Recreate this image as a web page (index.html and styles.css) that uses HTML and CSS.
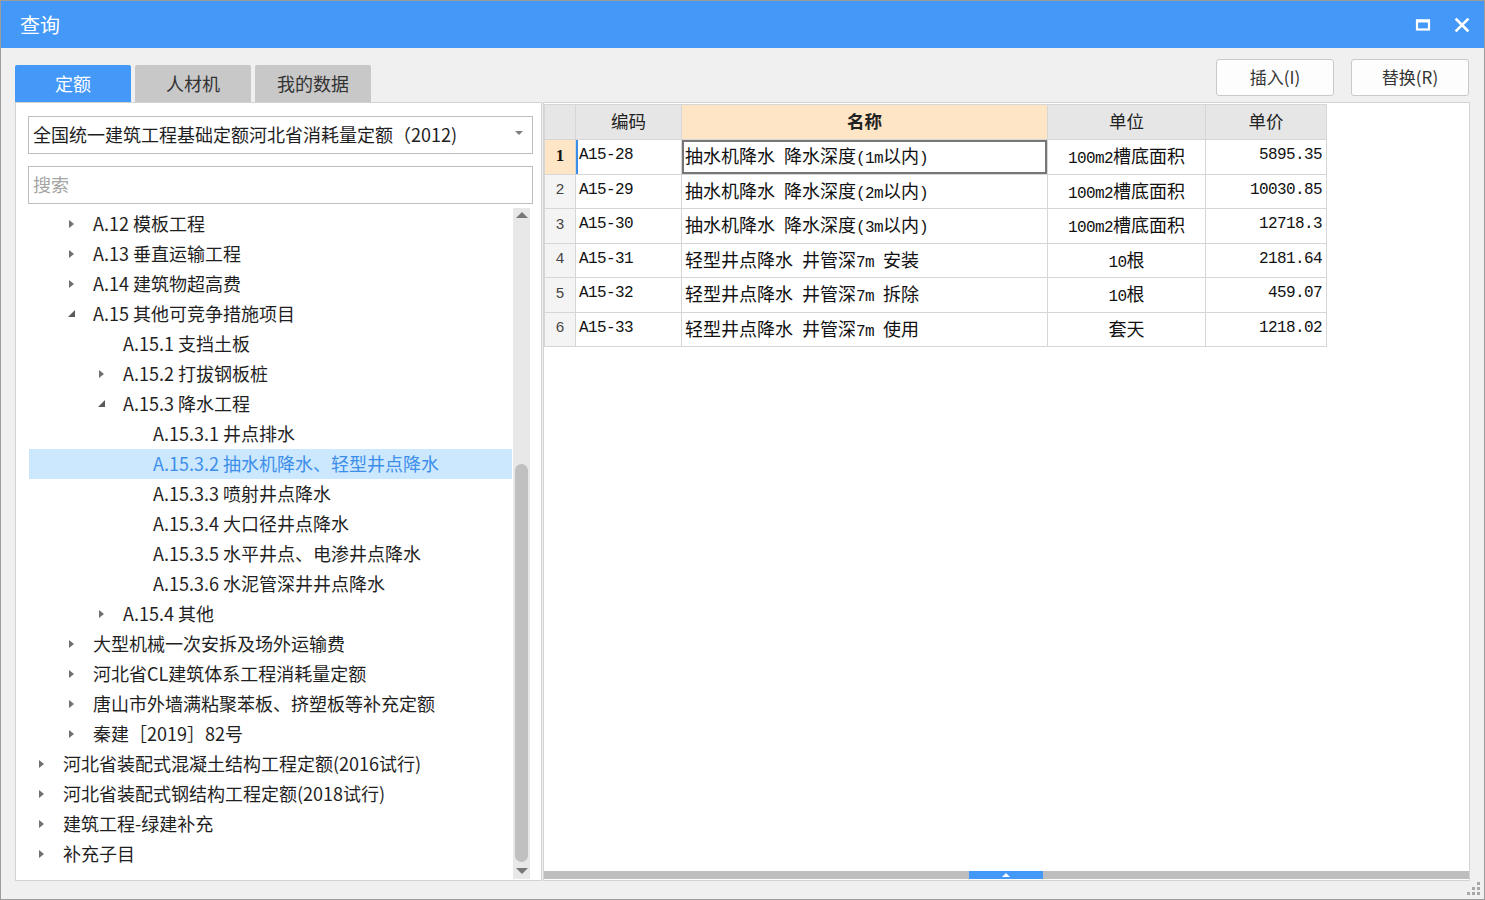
FILE: index.html
```html
<!DOCTYPE html>
<html lang="zh-CN">
<head>
<meta charset="utf-8">
<title>查询</title>
<link rel="stylesheet" href="styles.css">
</head>
<body>
<div class="window">
  <div class="titlebar">
    <span class="title">查询</span>
    <div class="winbtns">
      <svg class="wb" width="16" height="16" viewBox="0 0 16 16"><rect x="2" y="3.5" width="12" height="9" fill="none" stroke="#fff" stroke-width="2.2"/><rect x="1" y="2.5" width="14" height="3" fill="#fff"/></svg>
      <svg class="wb" width="16" height="16" viewBox="0 0 16 16"><path d="M2.5 2.5 L13.5 13.5 M13.5 2.5 L2.5 13.5" stroke="#fff" stroke-width="2.6" stroke-linecap="square"/></svg>
    </div>
  </div>
  <div class="toolbar">
    <div class="tabs">
      <div class="tab active">定额</div>
      <div class="tab">人材机</div>
      <div class="tab">我的数据</div>
    </div>
    <div class="actions">
      <div class="btn">插入(I)</div>
      <div class="btn">替换(R)</div>
    </div>
  </div>
  <div class="panels">
    <div class="left">
      <div class="select"><span>全国统一建筑工程基础定额河北省消耗量定额（2012)</span><i class="caret"></i></div>
      <div class="search">搜索</div>
      <div class="treewrap">
        <div class="tree">
          <div class="row l1"><i class="tw c"></i><span>A.12 模板工程</span></div>
          <div class="row l1"><i class="tw c"></i><span>A.13 垂直运输工程</span></div>
          <div class="row l1"><i class="tw c"></i><span>A.14 建筑物超高费</span></div>
          <div class="row l1"><i class="tw e"></i><span>A.15 其他可竞争措施项目</span></div>
          <div class="row l2"><i class="tw"></i><span>A.15.1 支挡土板</span></div>
          <div class="row l2"><i class="tw c"></i><span>A.15.2 打拔钢板桩</span></div>
          <div class="row l2"><i class="tw e"></i><span>A.15.3 降水工程</span></div>
          <div class="row l3"><i class="tw"></i><span>A.15.3.1 井点排水</span></div>
          <div class="row l3 sel"><i class="tw"></i><span>A.15.3.2 抽水机降水、轻型井点降水</span></div>
          <div class="row l3"><i class="tw"></i><span>A.15.3.3 喷射井点降水</span></div>
          <div class="row l3"><i class="tw"></i><span>A.15.3.4 大口径井点降水</span></div>
          <div class="row l3"><i class="tw"></i><span>A.15.3.5 水平井点、电渗井点降水</span></div>
          <div class="row l3"><i class="tw"></i><span>A.15.3.6 水泥管深井井点降水</span></div>
          <div class="row l2"><i class="tw c"></i><span>A.15.4 其他</span></div>
          <div class="row l1"><i class="tw c"></i><span>大型机械一次安拆及场外运输费</span></div>
          <div class="row l1"><i class="tw c"></i><span>河北省CL建筑体系工程消耗量定额</span></div>
          <div class="row l1"><i class="tw c"></i><span>唐山市外墙满粘聚苯板、挤塑板等补充定额</span></div>
          <div class="row l1"><i class="tw c"></i><span>秦建［2019］82号</span></div>
          <div class="row l0"><i class="tw c"></i><span>河北省装配式混凝土结构工程定额(2016试行)</span></div>
          <div class="row l0"><i class="tw c"></i><span>河北省装配式钢结构工程定额(2018试行)</span></div>
          <div class="row l0"><i class="tw c"></i><span>建筑工程-绿建补充</span></div>
          <div class="row l0"><i class="tw c"></i><span>补充子目</span></div>
        </div>
        <div class="vscroll">
          <i class="arr up"></i>
          <div class="vtrack"><div class="vthumb"></div></div>
          <i class="arr down"></i>
        </div>
      </div>
    </div>
    <div class="right">
      <div class="grid">
        <table>
          <colgroup><col class="c0"><col class="c1"><col class="c2"><col class="c3"><col class="c4"></colgroup>
          <thead>
            <tr><th></th><th>编码</th><th class="hl">名称</th><th>单位</th><th>单价</th></tr>
          </thead>
          <tbody>
            <tr class="cur"><td class="n">1</td><td class="code">A15-28</td><td class="name focus">抽水机降水<span class="m"> </span>降水深度<span class="m">(1m</span>以内<span class="m">)</span></td><td class="unit"><span class="m">100m2</span>槽底面积</td><td class="price">5895.35</td></tr>
            <tr><td class="n">2</td><td class="code">A15-29</td><td class="name">抽水机降水<span class="m"> </span>降水深度<span class="m">(2m</span>以内<span class="m">)</span></td><td class="unit"><span class="m">100m2</span>槽底面积</td><td class="price">10030.85</td></tr>
            <tr><td class="n">3</td><td class="code">A15-30</td><td class="name">抽水机降水<span class="m"> </span>降水深度<span class="m">(3m</span>以内<span class="m">)</span></td><td class="unit"><span class="m">100m2</span>槽底面积</td><td class="price">12718.3</td></tr>
            <tr><td class="n">4</td><td class="code">A15-31</td><td class="name">轻型井点降水<span class="m"> </span>井管深<span class="m">7m </span>安装</td><td class="unit"><span class="m">10</span>根</td><td class="price">2181.64</td></tr>
            <tr><td class="n">5</td><td class="code">A15-32</td><td class="name">轻型井点降水<span class="m"> </span>井管深<span class="m">7m </span>拆除</td><td class="unit"><span class="m">10</span>根</td><td class="price">459.07</td></tr>
            <tr><td class="n">6</td><td class="code">A15-33</td><td class="name">轻型井点降水<span class="m"> </span>井管深<span class="m">7m </span>使用</td><td class="unit">套天</td><td class="price">1218.02</td></tr>
          </tbody>
        </table>
      </div>
      <div class="hscroll"><div class="hthumb"><i class="hup"></i></div></div>
    </div>
  </div>
  <div class="statusbar">
    <svg class="grip" width="14" height="14" viewBox="0 0 14 14" fill="#a8a8a8">
      <rect x="10" y="0" width="3" height="3"/>
      <rect x="5" y="5" width="3" height="3"/><rect x="10" y="5" width="3" height="3"/>
      <rect x="0" y="10" width="3" height="3"/><rect x="5" y="10" width="3" height="3"/><rect x="10" y="10" width="3" height="3"/>
    </svg>
  </div>
</div>
</body>
</html>
```
FILE: styles.css
```css
* { box-sizing: border-box; }
html, body { margin: 0; padding: 0; }
body {
  width: 1485px;
  height: 900px;
  overflow: hidden;
  font-family: "Noto Sans CJK SC", "Noto Sans", sans-serif;
  color: #222;
  background: #f0f0f0;
}
.window {
  width: 1485px;
  height: 900px;
  border: 1px solid #9c9c9c;
  background: #f0f0f0;
  display: flex;
  flex-direction: column;
}
.titlebar {
  height: 47px;
  flex: none;
  background: #4498f8;
  display: flex;
  align-items: center;
  justify-content: space-between;
  padding: 0 14px 0 19px;
}
.title {
  color: #fff;
  font-size: 20px;
  line-height: 1;
  margin-top: 1px;
}
.winbtns {
  display: flex;
  gap: 23px;
  align-items: center;
}
.wb { display: block; }

.toolbar {
  height: 54px;
  flex: none;
  display: flex;
  justify-content: space-between;
  padding: 0 15px 0 14px;
}
.tabs {
  display: flex;
  gap: 4px;
  align-self: flex-end;
}
.tab {
  width: 116px;
  height: 37px;
  background: #c8c8c8;
  color: #333;
  font-size: 18px;
  display: flex;
  align-items: center;
  justify-content: center;
  padding-bottom: 2px;
  border-radius: 2px 2px 0 0;
}
.tab.active {
  background: #4498f8;
  color: #fff;
}
.actions {
  display: flex;
  gap: 17px;
  margin-top: 11px;
  align-self: flex-start;
}
.btn {
  width: 118px;
  height: 37px;
  border: 1px solid #c9c9c9;
  border-radius: 3px;
  background: #fdfdfd;
  color: #333;
  font-size: 17px;
  display: flex;
  align-items: center;
  justify-content: center;
  padding-bottom: 2px;
}

.panels {
  height: 779px;
  flex: none;
  display: flex;
  padding-left: 14px;
  gap: 1px;
}
.left {
  width: 527px;
  background: #fff;
  border: 1px solid #d3d3d3;
  display: flex;
  flex-direction: column;
  padding: 13px 8px 0 12px;
}
.select {
  height: 38px;
  border: 1px solid #bdbdbd;
  display: flex;
  align-items: center;
  justify-content: space-between;
  padding: 0 9px 2px 4px;
  font-size: 18px;
  color: #1e1e1e;
  flex: none;
}
.caret {
  width: 0; height: 0;
  border-left: 4px solid transparent;
  border-right: 4px solid transparent;
  border-top: 4px solid #808080;
  margin-bottom: 3px;
}
.search {
  margin-top: 12px;
  height: 38px;
  border: 1px solid #bdbdbd;
  display: flex;
  align-items: center;
  padding: 0 0 2px 4px;
  font-size: 18px;
  color: #a4a4a4;
  flex: none;
}
.treewrap {
  margin-top: 4px;
  flex: 1;
  display: flex;
  min-height: 0;
  padding-bottom: 1px;
}
.tree {
  width: 483px;
  margin-left: 1px;
  margin-right: 1px;
  padding-top: 1px;
  overflow: hidden;
}
.row {
  height: 30px;
  display: flex;
  align-items: center;
  font-size: 18px;
  color: #1f1f1f;
  white-space: nowrap;
}
.row span { margin-top: -3px; }
.row.l0 { padding-left: 0; }
.row.l1 { padding-left: 30px; }
.row.l2 { padding-left: 60px; }
.row.l3 { padding-left: 90px; }
.row.sel { background: #cce8ff; color: #3d8ee9; }
.tw {
  width: 34px;
  height: 30px;
  flex: none;
  position: relative;
}
.tw.c::before {
  content: "";
  position: absolute;
  left: 10px;
  top: 11px;
  border-left: 5px solid #707070;
  border-top: 4px solid transparent;
  border-bottom: 4px solid transparent;
}
.tw.e::before {
  content: "";
  position: absolute;
  left: 9px;
  top: 11px;
  border-bottom: 7px solid #5a5a5a;
  border-left: 7px solid transparent;
}
.vscroll {
  width: 17px;
  flex: none;
  background: #e8e8e8;
  display: flex;
  flex-direction: column;
  align-items: center;
}
.arr {
  display: block;
  width: 0; height: 0;
  flex: none;
  border-left: 6px solid transparent;
  border-right: 6px solid transparent;
}
.arr.up { border-bottom: 6px solid #777; margin: 4px 0 6px; }
.arr.down { border-top: 6px solid #777; margin: 6px 0 5px; }
.vtrack {
  flex: 1;
  width: 100%;
  display: flex;
  flex-direction: column;
  justify-content: flex-end;
  padding: 0 2px;
}
.vthumb {
  height: 398px;
  background: #c0c0c0;
  border-radius: 7px;
}

.right {
  width: 927px;
  background: #fff;
  border: 1px solid #d3d3d3;
  display: flex;
  flex-direction: column;
}
.grid {
  flex: 1;
}
table {
  border-collapse: collapse;
  table-layout: fixed;
  width: 782px;
  margin-top: 1px;
}
col.c0 { width: 31px; }
col.c1 { width: 106px; }
col.c2 { width: 366px; }
col.c3 { width: 158px; }
col.c4 { width: 121px; }
th, td {
  border: 1px solid #d6d6d6;
  padding: 0 0 3px 0;
  white-space: nowrap;
  overflow: hidden;
}
th {
  height: 35px;
  background: #e6e6e6;
  font-weight: normal;
  font-size: 17.5px;
  color: #222;
}
th.hl { background: #fde5c5; font-weight: bold; }
tbody tr { height: 34.5px; }
td {
  font-size: 18px;
  color: #111;
  font-family: "Noto Sans CJK SC", sans-serif;
}
.m { font-family: "Liberation Mono", monospace; font-size: 16px; letter-spacing: -0.6px; }
td.n {
  background: #f4f4f4;
  text-align: center;
  font-family: "Liberation Mono", monospace;
  font-size: 15px;
  color: #444;
  padding-bottom: 1px;
}
tr.cur td.n { background: #fde5c5; font-weight: bold; color: #111; font-family: "Liberation Serif", serif; font-size: 17px; }
td.code {
  font-family: "Liberation Mono", monospace;
  font-size: 16px;
  letter-spacing: -0.6px;
  padding-left: 3px;
}
tr.cur td.code { box-shadow: inset 2px 0 0 #3b8ee8; }
td.name { padding-left: 3px; }
td.focus { box-shadow: inset 0 0 0 2px #777; }
td.unit { text-align: center; }
td.price {
  text-align: right;
  padding-right: 4px;
  font-family: "Liberation Mono", monospace;
  font-size: 16px;
  letter-spacing: -0.6px;
}
.hscroll {
  height: 8px;
  margin-bottom: 1px;
  background: #bebebe;
  flex: none;
  padding-left: 425px;
}
.hthumb {
  width: 74px;
  height: 8px;
  background: #4498f8;
  display: flex;
  justify-content: center;
  align-items: center;
}
.hup {
  display: block;
  width: 0; height: 0;
  border-left: 4px solid transparent;
  border-right: 4px solid transparent;
  border-bottom: 4px solid #fff;
}

.statusbar {
  flex: 1;
  display: flex;
  justify-content: flex-end;
  align-items: flex-end;
  padding: 0 3px 3px 0;
}
.grip { display: block; }
```
